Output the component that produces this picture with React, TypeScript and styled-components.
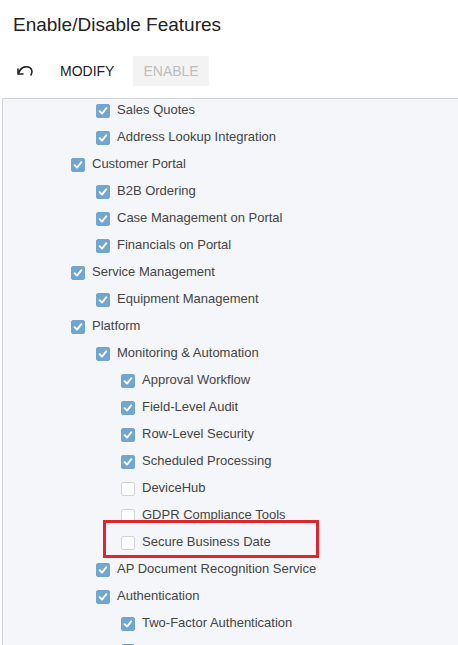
import React from "react";
import styled, { createGlobalStyle } from "styled-components";

const Global = createGlobalStyle`
  html, body { margin: 0; padding: 0; background: #ffffff; }
  body { font-family: "Liberation Sans", Arial, sans-serif; overflow: hidden; }
`;

const Page = styled.div`
  width: 458px;
  height: 645px;
  display: flex;
  flex-direction: column;
  overflow: hidden;
`;

const Title = styled.h1`
  margin: 0;
  padding: 13px 0 0 13px;
  height: 41px;
  box-sizing: border-box;
  font-size: 19px;
  font-weight: 400;
  color: #222;
  line-height: 24px;
`;

const Toolbar = styled.div`
  display: flex;
  align-items: center;
  height: 31px;
  margin-top: 14px;
  padding-left: 14px;
`;

const IconButton = styled.button`
  border: 0;
  background: transparent;
  padding: 0;
  width: 22px;
  height: 22px;
  display: flex;
  align-items: center;
  justify-content: center;
  margin-right: 16px;
  margin-top: -2px;
  color: #222;
`;

const ToolButton = styled.button<{ $disabled?: boolean }>`
  border: 0;
  height: 30px;
  padding: 0 ${(p) => (p.$disabled ? "10px" : "8px")};
  margin-right: ${(p) => (p.$disabled ? "0" : "11px")};
  font-family: "Liberation Sans", Arial, sans-serif;
  font-size: 14px;
  color: ${(p) => (p.$disabled ? "#bdbdbd" : "#222")};
  background: ${(p) => (p.$disabled ? "#f3f3f3" : "transparent")};
`;

const Panel = styled.div`
  position: relative;
  flex: 1;
  margin-top: 12px;
  margin-left: 2px;
  border-top: 1px solid #d4d6d9;
  border-left: 1px solid #d4d6d9;
  background: #f4f6f9;
  overflow: hidden;
`;

const List = styled.ul`
  list-style: none;
  margin: -3px 0 0 0;
  padding: 0;
`;

const Row = styled.li<{ $level: number }>`
  height: 27px;
  display: flex;
  align-items: center;
  padding-left: ${(p) => 68 + p.$level * 25}px;
  font-size: 13px;
  color: #444;
`;

const Box = styled.span<{ $checked: boolean }>`
  width: 14px;
  height: 14px;
  box-sizing: border-box;
  border-radius: 2px;
  margin-right: 7px;
  margin-top: 3px;
  display: flex;
  align-items: center;
  justify-content: center;
  background: ${(p) => (p.$checked ? "#71a6d1" : "#ffffff")};
  border: 1px solid ${(p) => (p.$checked ? "#71a6d1" : "#d2d4d7")};
`;

const Highlight = styled.div`
  position: absolute;
  left: 100px;
  top: 421px;
  width: 216px;
  height: 38px;
  border: 3px solid #e0262c;
  box-sizing: border-box;
  pointer-events: none;
`;

const items: [number, string, boolean][] = [
  [1, "Sales Quotes", true],
  [1, "Address Lookup Integration", true],
  [0, "Customer Portal", true],
  [1, "B2B Ordering", true],
  [1, "Case Management on Portal", true],
  [1, "Financials on Portal", true],
  [0, "Service Management", true],
  [1, "Equipment Management", true],
  [0, "Platform", true],
  [1, "Monitoring & Automation", true],
  [2, "Approval Workflow", true],
  [2, "Field-Level Audit", true],
  [2, "Row-Level Security", true],
  [2, "Scheduled Processing", true],
  [2, "DeviceHub", false],
  [2, "GDPR Compliance Tools", false],
  [2, "Secure Business Date", false],
  [1, "AP Document Recognition Service", true],
  [1, "Authentication", true],
  [2, "Two-Factor Authentication", true],
  [2, "OpenID Connect", true],
];

const Check = () => (
  <svg width="10" height="10" viewBox="0 0 10 10">
    <path d="M1.6 5.2 L4 7.6 L8.4 2.2" fill="none" stroke="#fff" strokeWidth="1.9" strokeLinecap="round" strokeLinejoin="round" />
  </svg>
);

const UndoIcon = () => (
  <svg width="20" height="14" viewBox="0 0 20 14">
    <path d="M4 9.5 C6 3 14 2 16.5 6.5 C17.5 8.5 17 10.5 16 12" fill="none" stroke="#222" strokeWidth="1.6" strokeLinecap="round" />
    <path d="M3 6 L3 11 L8 11" fill="none" stroke="#222" strokeWidth="1.6" strokeLinecap="round" strokeLinejoin="miter" />
  </svg>
);

export default function App() {
  return (
    <Page>
      <Global />
      <Title>Enable/Disable Features</Title>
      <Toolbar>
        <IconButton aria-label="Undo">
          <UndoIcon />
        </IconButton>
        <ToolButton>MODIFY</ToolButton>
        <ToolButton $disabled>ENABLE</ToolButton>
      </Toolbar>
      <Panel>
        <List>
          {items.map(([level, label, checked]) => (
            <Row key={label} $level={level}>
              <Box $checked={checked}>{checked && <Check />}</Box>
              {label}
            </Row>
          ))}
        </List>
        <Highlight />
      </Panel>
    </Page>
  );
}
